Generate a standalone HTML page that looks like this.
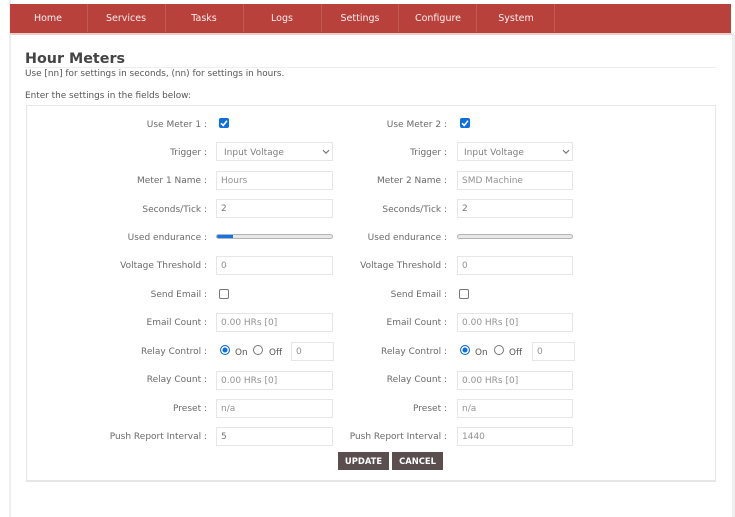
<!DOCTYPE html>
<html><head><meta charset="utf-8">
<style>
html,body{margin:0;padding:0;width:735px;height:517px;overflow:hidden;background:#fff}
body{position:relative;font-family:"DejaVu Sans","Liberation Sans",sans-serif;font-size:8.9px;color:#555;filter:blur(.3px)}
div,span,i{position:absolute;box-sizing:border-box;display:block;font-style:normal;white-space:nowrap}
.nav{left:10px;top:4px;width:721px;height:29px;background:#b9413c}
.nt{top:5px;height:29px;line-height:27px;color:#fbeeed;text-align:center;width:78px;font-size:9.5px}
.sep{top:4px;width:1px;height:28px;background:#c55a54}
.l{width:100px;text-align:right;color:#6a6a6a;line-height:12px;height:12px;font-size:9px}
.in{height:19px;background:#fff;border:1px solid #e6e6e6;color:#929292;line-height:19px;padding-left:4px;font-size:9px}
.cb{width:10px;height:10px;border-radius:2px}
.on{background:#0b6fe0}
.off{border:1px solid #777;background:#fff}
.pb{height:5px;border:1px solid #b4b4b4;border-radius:3px;background:#e8e8e8;overflow:hidden}
.pb i{left:0;top:0;height:100%;background:#1076e8}
.rd{width:10px;height:10px;border-radius:50%;border:1px solid #777;background:#fff}
.rd.s{border:1px solid #0b6fe0;background:#0b6fe0;box-shadow:inset 0 0 0 1.5px #fff}
.b{top:452px;height:18px;background:#5a4f4e;color:#fff;font-weight:bold;font-size:8.4px;text-align:center;line-height:19px}
</style></head><body>
<div style="left:9px;top:0;width:2px;height:517px;background:#eee"></div>
<div style="left:732px;top:34px;width:3px;height:483px;background:#eee"></div>
<div class="nav"></div>
<div style="left:10px;top:33px;width:722px;height:2px;background:#eecdca"></div>
<span class="nt" style="left:9px">Home</span>
<span class="nt" style="left:87px">Services</span>
<span class="nt" style="left:165px">Tasks</span>
<span class="nt" style="left:243px">Logs</span>
<span class="nt" style="left:321px">Settings</span>
<span class="nt" style="left:399px">Configure</span>
<span class="nt" style="left:477px">System</span>
<i class="sep" style="left:87px"></i><i class="sep" style="left:165px"></i><i class="sep" style="left:243px"></i><i class="sep" style="left:321px"></i><i class="sep" style="left:398px"></i><i class="sep" style="left:476px"></i><i class="sep" style="left:554px"></i>

<div style="left:25px;top:50px;font-size:14.3px;font-weight:bold;color:#444;line-height:18px">Hour Meters</div>
<div style="left:25px;top:67px;width:691px;height:1px;background:#eee"></div>
<div style="left:25px;top:68px;line-height:12px">Use [nn] for settings in seconds, (nn) for settings in hours.</div>
<div style="left:25px;top:90px;line-height:12px">Enter the settings in the fields below:</div>
<div style="left:26px;top:105px;width:690px;height:377px;border:1px solid #e6e6e6;border-bottom-width:2px"></div>

<!-- left column -->
<span class="l" style="left:107px;top:119px">Use Meter 1 :</span>
<i class="cb on" style="left:219px;top:118px"></i>
<svg style="position:absolute;left:219px;top:118px" width="10" height="10" viewBox="0 0 10 10"><path d="M2 5.2 4.2 7.4 8 2.8" fill="none" stroke="#fff" stroke-width="1.6"/></svg>
<span class="l" style="left:107px;top:147px">Trigger :</span>
<div class="in" style="left:216px;top:142px;width:117px;padding-left:7px;color:#808080;line-height:20px">Input Voltage</div>
<svg style="position:absolute;left:322px;top:149px" width="8" height="6" viewBox="0 0 8 6"><path d="M1 1.2 4 4.2 7 1.2" fill="none" stroke="#777" stroke-width="1.1"/></svg>
<span class="l" style="left:107px;top:175px">Meter 1 Name :</span>
<div class="in" style="left:216px;top:171px;width:117px">Hours</div>
<span class="l" style="left:107px;top:204px">Seconds/Tick :</span>
<div class="in" style="left:216px;top:199px;width:117px;color:#777">2</div>
<span class="l" style="left:107px;top:232px">Used endurance :</span>
<div class="pb" style="left:216px;top:234px;width:117px"><i style="width:16px"></i></div>
<span class="l" style="left:107px;top:260px">Voltage Threshold :</span>
<div class="in" style="left:216px;top:256px;width:117px">0</div>
<span class="l" style="left:107px;top:289px">Send Email :</span>
<i class="cb off" style="left:219px;top:289px"></i>
<span class="l" style="left:107px;top:317px">Email Count :</span>
<div class="in" style="left:216px;top:313px;width:117px">0.00 HRs [0]</div>
<span class="l" style="left:107px;top:346px">Relay Control :</span>
<i class="rd s" style="left:220px;top:345px"></i><span style="left:235px;top:347px;line-height:12px">On</span>
<i class="rd" style="left:253px;top:345px"></i><span style="left:269px;top:347px;line-height:12px">Off</span>
<div class="in" style="left:291px;top:342px;width:43px">0</div>
<span class="l" style="left:107px;top:374px">Relay Count :</span>
<div class="in" style="left:216px;top:371px;width:117px">0.00 HRs [0]</div>
<span class="l" style="left:107px;top:403px">Preset :</span>
<div class="in" style="left:216px;top:399px;width:117px">n/a</div>
<span class="l" style="left:107px;top:431px">Push Report Interval :</span>
<div class="in" style="left:216px;top:427px;width:117px;color:#777">5</div>

<!-- right column -->
<span class="l" style="left:347px;top:119px">Use Meter 2 :</span>
<i class="cb on" style="left:460px;top:118px"></i>
<svg style="position:absolute;left:460px;top:118px" width="10" height="10" viewBox="0 0 10 10"><path d="M2 5.2 4.2 7.4 8 2.8" fill="none" stroke="#fff" stroke-width="1.6"/></svg>
<span class="l" style="left:347px;top:147px">Trigger :</span>
<div class="in" style="left:457px;top:142px;width:116px;padding-left:6px;color:#808080;line-height:20px">Input Voltage</div>
<svg style="position:absolute;left:562px;top:149px" width="8" height="6" viewBox="0 0 8 6"><path d="M1 1.2 4 4.2 7 1.2" fill="none" stroke="#777" stroke-width="1.1"/></svg>
<span class="l" style="left:347px;top:175px">Meter 2 Name :</span>
<div class="in" style="left:457px;top:171px;width:116px">SMD Machine</div>
<span class="l" style="left:347px;top:204px">Seconds/Tick :</span>
<div class="in" style="left:457px;top:199px;width:116px;color:#777">2</div>
<span class="l" style="left:347px;top:232px">Used endurance :</span>
<div class="pb" style="left:457px;top:234px;width:116px"></div>
<span class="l" style="left:347px;top:260px">Voltage Threshold :</span>
<div class="in" style="left:457px;top:256px;width:116px">0</div>
<span class="l" style="left:347px;top:289px">Send Email :</span>
<i class="cb off" style="left:459px;top:289px"></i>
<span class="l" style="left:347px;top:317px">Email Count :</span>
<div class="in" style="left:457px;top:313px;width:116px">0.00 HRs [0]</div>
<span class="l" style="left:347px;top:346px">Relay Control :</span>
<i class="rd s" style="left:460px;top:345px"></i><span style="left:475px;top:347px;line-height:12px">On</span>
<i class="rd" style="left:494px;top:345px"></i><span style="left:509px;top:347px;line-height:12px">Off</span>
<div class="in" style="left:532px;top:342px;width:43px">0</div>
<span class="l" style="left:347px;top:374px">Relay Count :</span>
<div class="in" style="left:457px;top:371px;width:116px">0.00 HRs [0]</div>
<span class="l" style="left:347px;top:403px">Preset :</span>
<div class="in" style="left:457px;top:399px;width:116px">n/a</div>
<span class="l" style="left:347px;top:431px">Push Report Interval :</span>
<div class="in" style="left:457px;top:427px;width:116px">1440</div>

<div class="b" style="left:338px;width:51px">UPDATE</div>
<div class="b" style="left:392px;width:51px">CANCEL</div>
</body></html>
